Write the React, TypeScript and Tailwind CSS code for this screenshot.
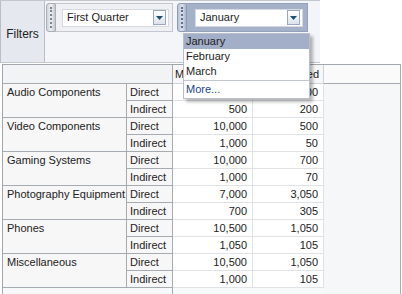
import { FC } from 'react';

type Row = { name: string; direct: [string, string]; indirect: [string, string] };

const rows: Row[] = [
  { name: 'Audio Components', direct: ['5,000', '2,000'], indirect: ['500', '200'] },
  { name: 'Video Components', direct: ['10,000', '500'], indirect: ['1,000', '50'] },
  { name: 'Gaming Systems', direct: ['10,000', '700'], indirect: ['1,000', '70'] },
  { name: 'Photography Equipment', direct: ['7,000', '3,050'], indirect: ['700', '305'] },
  { name: 'Phones', direct: ['10,500', '1,050'], indirect: ['1,050', '105'] },
  { name: 'Miscellaneous', direct: ['10,500', '1,050'], indirect: ['1,000', '105'] },
];

const Handle: FC<{ active?: boolean }> = ({ active }) => (
  <div
    className={
      active
        ? 'flex h-[29px] w-[10px] justify-center rounded-l-[3px] border border-[#8f9bb6] bg-gradient-to-r from-[#b9c2d6] via-[#dde2ec] to-[#a9b3ca] py-[3px]'
        : 'flex h-[29px] w-[10px] justify-center rounded-l-[3px] border border-[#a9adb6] bg-gradient-to-r from-[#cfd3db] via-[#eef0f3] to-[#c4c8d0] py-[3px]'
    }
  >
    <div
      className={
        active
          ? 'h-full w-0 border-l-2 border-dotted border-[#5f6f92]'
          : 'h-full w-0 border-l-2 border-dotted border-[#7c8290]'
      }
    />
  </div>
);

const ArrowButton: FC = () => (
  <div className="flex h-[15px] w-[13px] items-center justify-center border border-[#9aa9bf] bg-gradient-to-b from-white to-[#dde3ec]">
    <svg width="7" height="4" viewBox="0 0 7 4">
      <path d="M0 0h7L3.5 4z" fill="#1f4e73" />
    </svg>
  </div>
);

const Select: FC<{ label: string; width: string }> = ({ label, width }) => (
  <div className={`flex h-[18px] items-center justify-between border border-[#d6d9df] bg-white pl-[4px] pr-[2px] ${width}`}>
    <span>{label}</span>
    <ArrowButton />
  </div>
);

const Menu: FC = () => (
  <div className="absolute left-[183px] top-[33px] w-[127px] border border-[#b9bec8] bg-white pb-[1px] shadow-[3px_3px_3px_rgba(0,0,0,0.28)]">
    <div className="h-[15px] bg-[#a3aec8] pl-[2px] leading-[15px]">January</div>
    <div className="h-[15px] pl-[2px] leading-[15px]">February</div>
    <div className="h-[15px] pl-[2px] leading-[15px]">March</div>
    <div className="mx-0 my-[1px] h-px bg-[#c3c7cf]" />
    <div className="h-[15px] pl-[2px] leading-[15px] text-[#1d3f8c]">More...</div>
  </div>
);

const dataCell = 'h-[17px] border-b border-r border-[#e0e2e6] bg-white pr-[5px] text-right leading-[16px]';
const subCell = 'h-[17px] border-b border-r border-[#a6aab1] bg-[#f7f7f8] pl-[3px] leading-[16px]';

export default function App(): JSX.Element {
  return (
    <div className="relative h-[294px] w-[402px] overflow-hidden bg-white font-['Liberation_Sans',Arial,sans-serif] text-[11px] text-[#222]">
      <div className="flex h-[63px]">
        <div className="flex w-[320px] border-b border-t border-[#c3c7ce]">
          <div className="flex w-[45px] items-center justify-center border-l border-r border-[#b9bdc5] bg-[#e5e8ee] pt-[5px] text-[12px]">
            Filters
          </div>
          <div className="flex flex-1 items-start gap-[4px] bg-[#f4f5f8] pl-[1px] pt-[2px]">
            <div className="flex">
              <Handle />
              <div className="flex h-[29px] w-[117px] items-center border border-l-0 border-[#c4c7ce] bg-[#eef0f3] pl-[6px]">
                <Select label="First Quarter" width="w-[107px]" />
              </div>
            </div>
            <div className="flex">
              <Handle active />
              <div className="flex h-[29px] w-[121px] items-center border border-l-0 border-[#95a1bb] bg-[#a5b0c9] pl-[8px]">
                <Select label="January" width="w-[108px]" />
              </div>
            </div>
          </div>
        </div>
        <div className="flex-1" />
      </div>

      <div className="ml-[2px] mt-[1px] grid w-[399px] grid-cols-[124px_46px_80px_71px_77px] border-l border-t border-[#a2a6ad]">
        <div className="col-span-2 h-[19px] border-b border-r border-[#a6aab1] bg-[#f2f3f5]" />
        <div className="h-[19px] border-b border-r border-[#cfd2d7] bg-[#f7f7f9] pl-[2px] leading-[18px]">Market</div>
        <div className="h-[19px] border-b border-r border-[#cfd2d7] bg-[#f7f7f9] pr-[4px] text-right leading-[18px]">Forecasted</div>
        <div className="h-[19px] border-b border-r border-[#a6aab1] bg-[#fafafb]" />

        {rows.map((r, i) => (
          <div key={r.name} className="contents">
            <div className="row-span-2 h-[34px] border-b border-r border-[#a6aab1] bg-[#f7f7f8] pl-[4px] leading-[16px]">
              {r.name}
            </div>
            <div className={subCell}>Direct</div>
            <div className={dataCell}>{r.direct[0]}</div>
            <div className={dataCell}>{r.direct[1]}</div>
            <div className={i === 0 ? 'row-span-[12] border-r border-[#a6aab1] bg-[#f6f7f9]' : 'hidden'} />
            <div className={subCell}>Indirect</div>
            <div className={dataCell}>{r.indirect[0]}</div>
            <div className={dataCell}>{r.indirect[1]}</div>
          </div>
        ))}

        <div className="col-span-2 h-[10px] border-r border-[#a6aab1] bg-[#f8f8fa]" />
        <div className="col-span-2 h-[10px] bg-[#f8f9fa]" />
        <div className="h-[10px] border-r border-[#a6aab1] bg-[#f6f7f9]" />
      </div>

      <Menu />
    </div>
  );
}
